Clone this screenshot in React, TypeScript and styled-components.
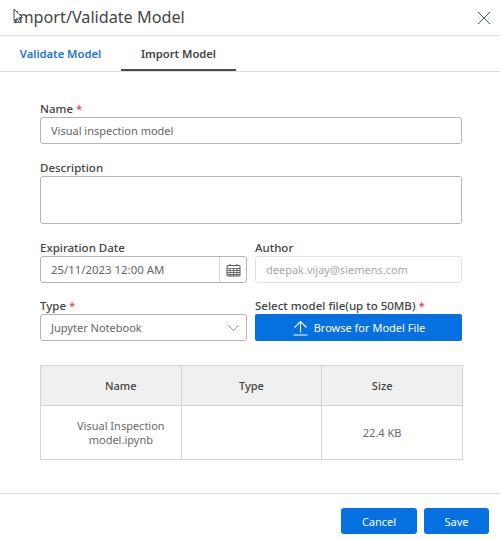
import React from 'react';
import styled, { createGlobalStyle } from 'styled-components';

const GlobalStyle = createGlobalStyle`
  html, body {
    margin: 0;
    padding: 0;
    background: #fff;
  }
  body {
    font-family: "Noto Sans", "Open Sans", sans-serif;
    color: #333;
  }
`;

const Dialog = styled.div`
  position: relative;
  width: 500px;
  height: 540px;
  overflow: hidden;
  display: flex;
  flex-direction: column;
  background: #fff;
`;

const Header = styled.header`
  height: 36px;
  box-sizing: border-box;
  flex: none;
  display: flex;
  align-items: center;
  justify-content: space-between;
  padding: 0 9px 0 13px;
  border-bottom: 1px solid #dedede;
`;

const Title = styled.h1`
  margin: 0;
  font-size: 16.2px;
  font-weight: 400;
  color: #444;
  line-height: 35px;
`;

const CloseButton = styled.button`
  border: 0;
  background: none;
  padding: 0;
  width: 14px;
  height: 14px;
  display: flex;
  color: #4a5f6a;
`;

const Pointer = styled.svg`
  position: absolute;
  left: 13px;
  top: 8px;
`;

const Tabs = styled.nav`
  height: 36px;
  box-sizing: border-box;
  flex: none;
  display: flex;
  border-bottom: 1px solid #dedede;
`;

const Tab = styled.div<{ $active?: boolean }>`
  height: 35px;
  box-sizing: border-box;
  width: ${(p) => (p.$active ? '115px' : '121px')};
  display: flex;
  align-items: center;
  justify-content: center;
  padding-top: ${(p) => (p.$active ? '2px' : '0')};
  font-size: 11.2px;
  font-weight: 600;
  color: ${(p) => (p.$active ? '#444' : '#1a73d9')};
  border-bottom: ${(p) => (p.$active ? '2px solid #4a4a4a' : '0')};
`;

const Form = styled.section`
  flex: 1;
  padding: 28px 38px 0 40px;
  display: flex;
  flex-direction: column;
`;

const Field = styled.div`
  display: flex;
  flex-direction: column;
  min-width: 0;
`;

const Label = styled.label`
  height: 17px;
  line-height: 17px;
  font-size: 11.5px;
  font-weight: 500;
  color: #444;
  white-space: nowrap;
`;

const Star = styled.span`
  color: #e0406a;
  margin-left: 3px;
`;

const Input = styled.div<{ $disabled?: boolean }>`
  height: 27px;
  box-sizing: border-box;
  display: flex;
  align-items: center;
  padding: 0 10px;
  font-size: 11px;
  white-space: nowrap;
  border-radius: 3px;
  color: ${(p) => (p.$disabled ? '#a8a8a8' : '#666')};
  border: 1px solid ${(p) => (p.$disabled ? '#e2e2e2' : '#b5b5b5')};
`;

const TextArea = styled(Input)`
  height: 48px;
`;

const FieldGap = styled.div<{ $size?: number }>`
  height: ${(p) => p.$size ?? 15}px;
`;

const Row = styled.div`
  display: grid;
  grid-template-columns: 207px 207px;
  column-gap: 8px;
`;

const DateInput = styled(Input)`
  padding: 0 0 0 10px;
  justify-content: space-between;
  font-size: 11.4px;
`;

const CalendarCell = styled.span`
  width: 26px;
  height: 100%;
  flex: none;
  display: flex;
  align-items: center;
  justify-content: center;
  border-left: 1px solid #dcdcdc;
`;

const SelectInput = styled(Input)`
  justify-content: space-between;
  padding-right: 7px;
`;

const BrowseButton = styled.button`
  height: 27px;
  border: 0;
  border-radius: 2px;
  padding: 0 0 0 1px;
  display: flex;
  align-items: center;
  justify-content: center;
  gap: 6px;
  background: #0570e0;
  color: #fff;
  font-family: inherit;
  font-size: 11px;
  font-weight: 400;
`;

const Table = styled.table`
  width: 423px;
  margin-top: 24px;
  border-collapse: collapse;
  table-layout: fixed;
  font-size: 11px;
  text-align: center;

  th, td {
    border: 1px solid #d4d4d4;
    padding: 0 10px;
  }
  th:first-child, td:first-child {
    padding-left: 30px;
  }
  th:last-child, td:last-child {
    padding-right: 30px;
  }
  th {
    height: 39px;
    background: #f0f0f0;
    font-weight: 500;
    color: #444;
  }
  td {
    height: 53px;
    color: #6a6a6a;
    line-height: 14px;
  }
`;

const Footer = styled.footer`
  height: 47px;
  box-sizing: border-box;
  flex: none;
  display: flex;
  justify-content: flex-end;
  gap: 7px;
  padding: 14px 11px 0 0;
  border-top: 1px solid #dedede;
`;

const FooterButton = styled.button<{ $width: number }>`
  width: ${(p) => p.$width}px;
  height: 26px;
  border: 0;
  border-radius: 3px;
  padding: 0;
  background: #0570e0;
  color: #fff;
  font-family: inherit;
  font-size: 11px;
  font-weight: 400;
`;

const CalendarIcon = () => (
  <svg width="15" height="14" viewBox="0 0 15 14" fill="none" stroke="#555" strokeWidth="1">
    <path d="M1.5 2.5h12a.5.5 0 0 1 .5.5v9.5a.5.5 0 0 1-.5.5h-12a.5.5 0 0 1-.5-.5V3a.5.5 0 0 1 .5-.5z" />
    <path d="M1 5.5h13M1 7.5h13M1 9.5h13M1 11.5h13M4 5.5v7.5M7.5 5.5v7.5M11 5.5v7.5" strokeWidth="0.8" />
    <path d="M4 1v2M11 1v2" />
  </svg>
);

const UploadIcon = () => (
  <svg width="15" height="16" viewBox="0 0 15 16" fill="none" stroke="#fff" strokeWidth="1.1">
    <path d="M7.5 12.5V1.5M1.5 7.5l6-6 6 6M0.5 15h14" />
  </svg>
);

export default function App() {
  return (
    <Dialog>
      <GlobalStyle />
      <Header>
        <Title>Import/Validate Model</Title>
        <CloseButton aria-label="Close">
          <svg width="14" height="14" viewBox="0 0 14 14" fill="none" stroke="currentColor" strokeWidth="1">
            <path d="M1 1l12 12M13 1L1 13" />
          </svg>
        </CloseButton>
      </Header>
      <Pointer width="11" height="16" viewBox="0 0 11 16">
        <path d="M1 1v12l3-2.6 2 4.4 1.8-.8-2-4.3H9.5z" fill="#fff" stroke="#444" strokeWidth="1" />
      </Pointer>
      <Tabs>
        <Tab>Validate Model</Tab>
        <Tab $active>Import Model</Tab>
      </Tabs>
      <Form>
        <Field>
          <Label>Name<Star>*</Star></Label>
          <Input>Visual inspection model</Input>
        </Field>
        <FieldGap />
        <Field>
          <Label>Description</Label>
          <TextArea />
        </Field>
        <FieldGap />
        <Row>
          <Field>
            <Label>Expiration Date</Label>
            <DateInput>
              25/11/2023 12:00 AM
              <CalendarCell><CalendarIcon /></CalendarCell>
            </DateInput>
          </Field>
          <Field>
            <Label>Author</Label>
            <Input $disabled>deepak.vijay@siemens.com</Input>
          </Field>
        </Row>
        <FieldGap $size={14} />
        <Row>
          <Field>
            <Label>Type<Star>*</Star></Label>
            <SelectInput>
              Jupyter Notebook
              <svg width="11" height="6" viewBox="0 0 11 6" fill="none" stroke="#888" strokeWidth="0.9">
                <path d="M0.5 0.5l5 5 5-5" />
              </svg>
            </SelectInput>
          </Field>
          <Field>
            <Label>Select model file(up to 50MB)<Star>*</Star></Label>
            <BrowseButton><UploadIcon />Browse for Model File</BrowseButton>
          </Field>
        </Row>
        <Table>
          <thead>
            <tr>
              <th>Name</th>
              <th>Type</th>
              <th>Size</th>
            </tr>
          </thead>
          <tbody>
            <tr>
              <td>Visual Inspection model.ipynb</td>
              <td />
              <td>22.4 KB</td>
            </tr>
          </tbody>
        </Table>
      </Form>
      <Footer>
        <FooterButton $width={76}>Cancel</FooterButton>
        <FooterButton $width={65}>Save</FooterButton>
      </Footer>
    </Dialog>
  );
}
